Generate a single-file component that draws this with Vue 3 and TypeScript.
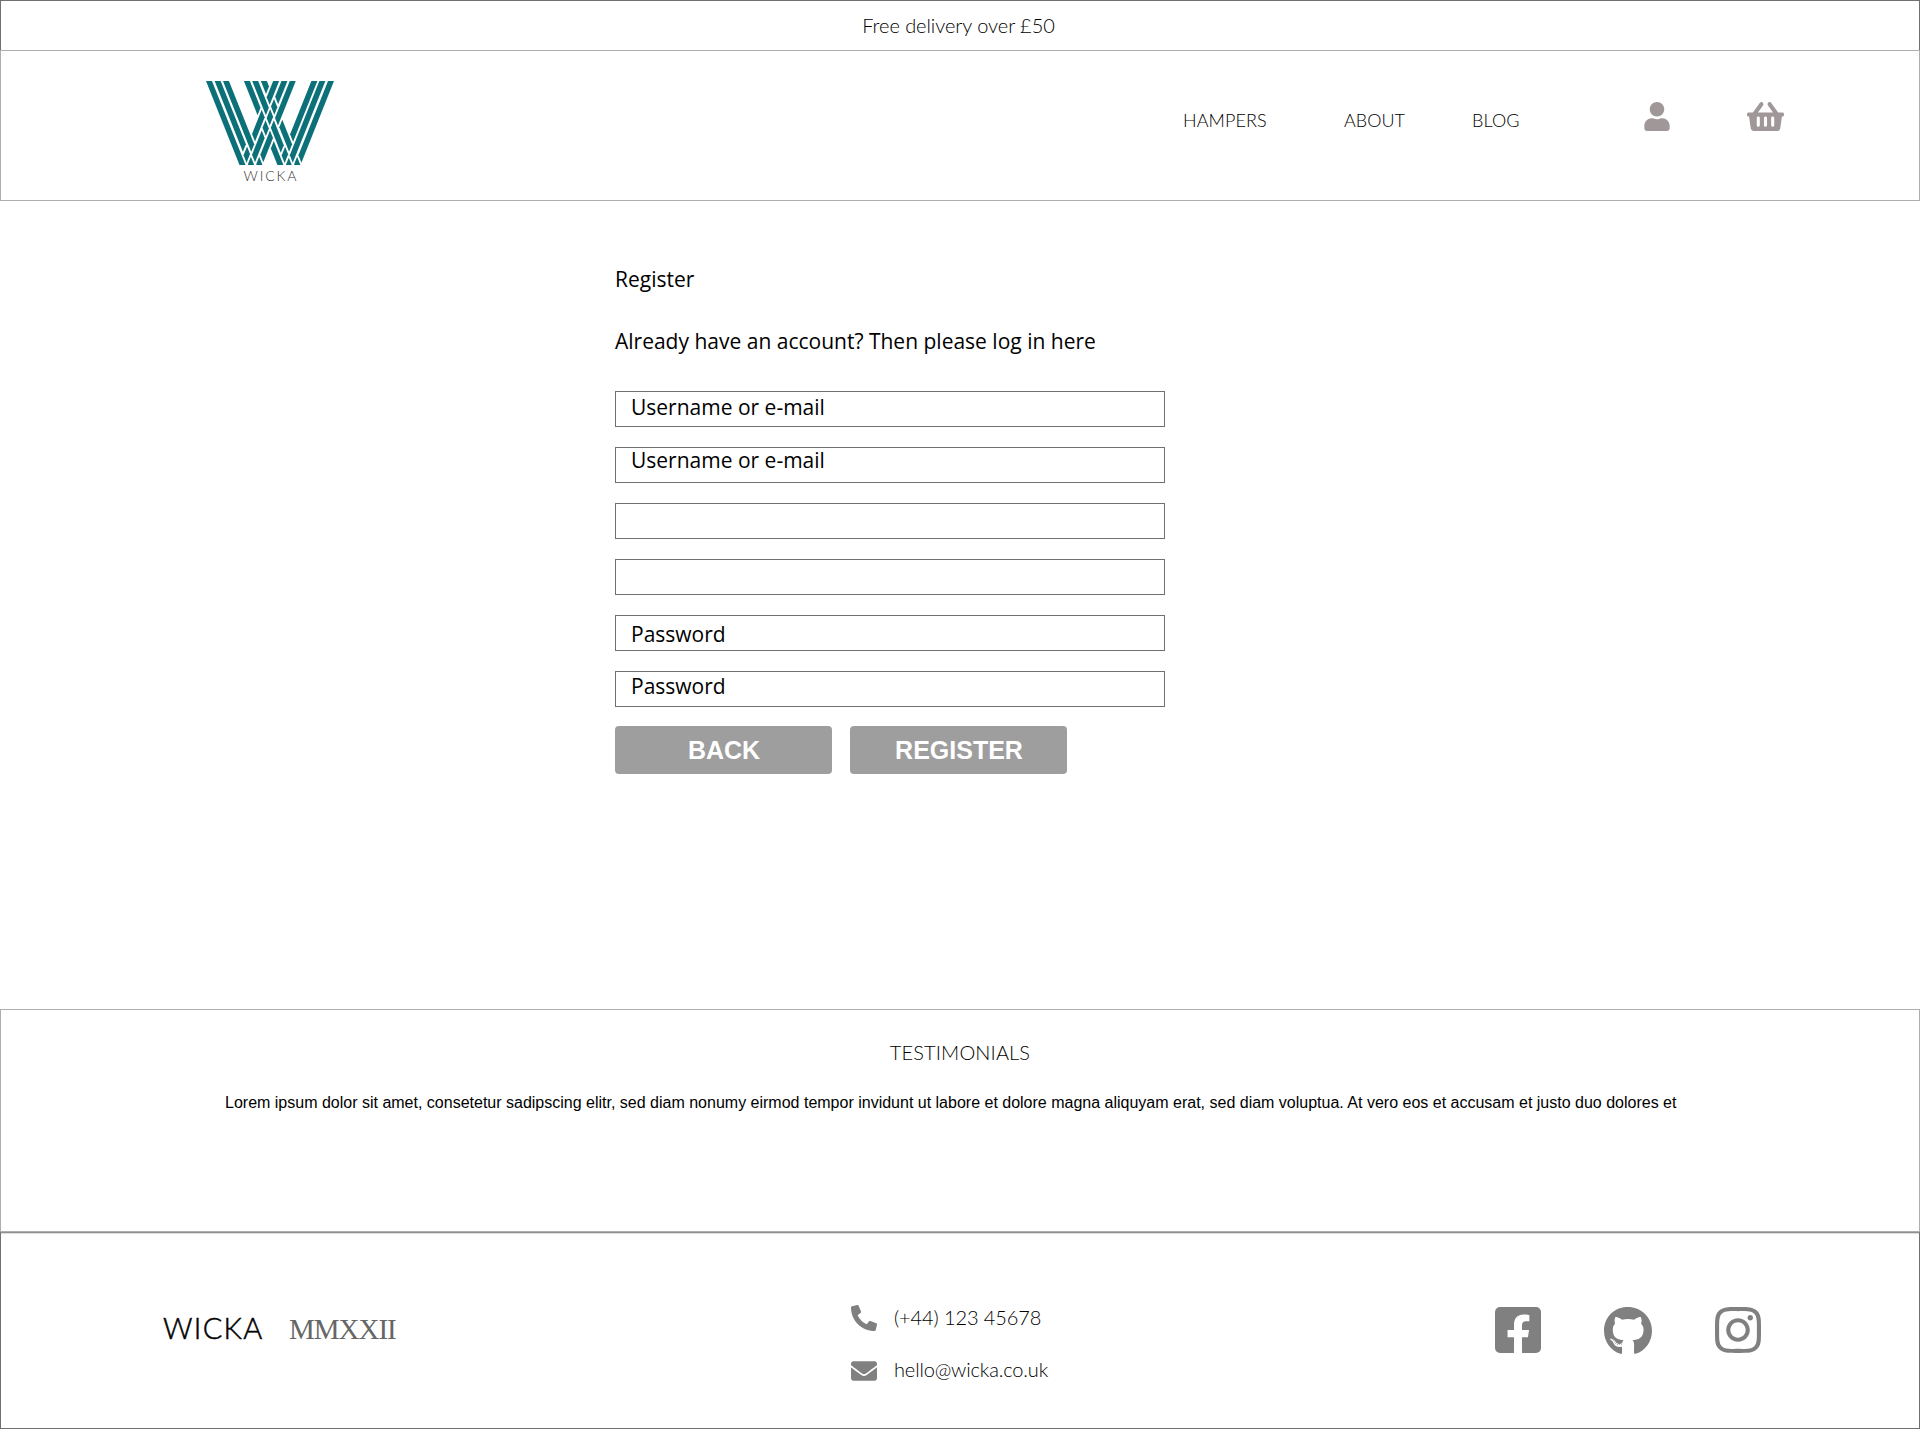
<script setup lang="ts">
interface Field {
  id: number
  text: string
  shift: number
}

const fields: Field[] = [
  { id: 1, text: 'Username or e-mail', shift: 2 },
  { id: 2, text: 'Username or e-mail', shift: -1 },
  { id: 3, text: '', shift: 0 },
  { id: 4, text: '', shift: 0 },
  { id: 5, text: 'Password', shift: 5 },
  { id: 6, text: 'Password', shift: 1 },
]

const lorem =
  'Lorem ipsum dolor sit amet, consetetur sadipscing elitr, sed diam nonumy eirmod tempor invidunt ut labore et dolore magna aliquyam erat, sed diam voluptua. At vero eos et accusam et justo duo dolores et'

/* Woven W: falling and rising strands pass over and under each other in turn. */
const slope = 0.397
const height = 254
const strand = 18
const gap = 6
const falling = [48, 74, 99, 162, 187, 213]
const rising = [250, 275, 300, 365, 389, 415]

/* u is constant along a falling strand, v along a rising one. */
function piece(u1: number, u2: number, v1: number, v2: number): string {
  return [[u1, v1], [u2, v1], [u2, v2], [u1, v2]]
    .map(([u, v]) => `${((u + v) / 2).toFixed(2)},${((v - u) / (2 * slope)).toFixed(2)}`)
    .join(' ')
}

function visible(start: number, end: number, hidden: number[]): [number, number][] {
  const parts: [number, number][] = []
  let from = start
  for (const x of hidden) {
    if (x - gap > from) parts.push([from, x - gap])
    from = x + strand + gap
  }
  if (end > from) parts.push([from, end])
  return parts
}

function meets(a: number, b: number): boolean {
  const y = (b - a) / (2 * slope)
  return y > 0 && y < height + 20
}

const pieces: string[] = []
falling.forEach((a, f) => {
  const over = rising.filter((b, r) => (f + r) % 2 === 1 && meets(a, b))
  for (const [v1, v2] of visible(a - 30, a + 260, over)) pieces.push(piece(a, a + strand, v1, v2))
})
rising.forEach((b, r) => {
  const over = falling.filter((a, f) => (f + r) % 2 === 0 && meets(a, b))
  for (const [u1, u2] of visible(b - 260, b + 60, over)) pieces.push(piece(u1, u2, b, b + strand))
})
</script>

<template>
  <div class="page">
    <div class="promo">Free delivery over £50</div>

    <header class="header">
      <div class="brand">
        <svg class="mark" viewBox="48 0 385 254" preserveAspectRatio="none">
          <polygon v-for="points in pieces" :key="points" :points="points" />
        </svg>
        <span class="brand-name">WICKA</span>
      </div>
      <nav class="nav">
        <a class="hampers">HAMPERS</a>
        <a class="about">ABOUT</a>
        <a class="blog">BLOG</a>
      </nav>
      <div class="tools">
        <svg class="user" viewBox="0 0 448 512"><path d="M224 256c70.7 0 128-57.3 128-128S294.7 0 224 0 96 57.3 96 128s57.3 128 128 128zm89.6 32h-16.7c-22.2 10.2-46.9 16-72.9 16s-50.6-5.8-72.9-16h-16.7C60.2 288 0 348.2 0 422.4V464c0 26.500 21.500 48 48 48h352c26.500 0 48-21.500 48-48v-41.600c0-74.200-60.200-134.400-134.400-134.400z" /></svg>
        <svg class="basket" viewBox="0 32 576 448"><path d="M576 216v16c0 13.255-10.745 24-24 24h-8l-26.113 182.788C514.509 462.435 494.257 480 470.37 480H105.63c-23.887 0-44.139-17.565-47.518-41.212L32 256h-8c-13.255 0-24-10.745-24-24v-16c0-13.255 10.745-24 24-24h67.341l106.78-146.821c10.395-14.292 30.407-17.453 44.701-7.058 14.293 10.395 17.453 30.408 7.058 44.701L170.477 192h235.046L326.12 82.821c-10.395-14.292-7.234-34.306 7.059-44.701 14.291-10.395 34.306-7.235 44.701 7.058L484.659 192H552c13.255 0 24 10.745 24 24zM312 392V280c0-13.255-10.745-24-24-24s-24 10.745-24 24v112c0 13.255 10.745 24 24 24s24-10.745 24-24zm112 0V280c0-13.255-10.745-24-24-24s-24 10.745-24 24v112c0 13.255 10.745 24 24 24s24-10.745 24-24zm-224 0V280c0-13.255-10.745-24-24-24s-24 10.745-24 24v112c0 13.255 10.745 24 24 24s24-10.745 24-24z" /></svg>
      </div>
    </header>

    <main class="main">
      <div class="form">
        <h1 class="line">Register</h1>
        <p class="line prompt">Already have an account? Then please log in here</p>
        <div class="fields">
          <div v-for="field in fields" :key="field.id" class="field">
            <span class="field-text" :style="{ marginTop: field.shift + 'px' }">{{ field.text }}</span>
          </div>
        </div>
        <div class="buttons">
          <button type="button">BACK</button>
          <button type="button">REGISTER</button>
        </div>
      </div>
    </main>

    <section class="testimonials">
      <h2>TESTIMONIALS</h2>
      <p>{{ lorem }}</p>
    </section>

    <footer class="footer">
      <div class="sign">
        <span class="sign-name">WICKA</span>
        <span class="sign-year">MMXXII</span>
      </div>
      <div class="contact">
        <div class="row">
          <svg class="phone" viewBox="0 0 512 512"><path transform="translate(512 0) scale(-1 1)" d="M14.610 361.800l112-48a24 24 0 0 1 28 6.900l49.600 60.600A370.660 370.660 0 0 0 381.400 204.110l-60.600-49.600a23.940 23.940 0 0 1-6.900-28l48-112A24.160 24.160 0 0 1 389.400.610l104 24A24 24 0 0 1 512 48c0 256.500-207.900 464-464 464a24 24 0 0 1-23.400-18.600l-24-104a24.290 24.290 0 0 1 14.010-27.600z" /></svg>
          <span class="tel">(+44) 123 45678</span>
        </div>
        <div class="row">
          <svg class="mail" viewBox="0 64 512 384"><path d="M502.3 190.8c3.9-3.1 9.7-.2 9.7 4.7V400c0 26.5-21.5 48-48 48H48c-26.5 0-48-21.500-48-48V195.600c0-5 5.700-7.800 9.700-4.700 22.400 17.400 52.100 39.500 154.100 113.600 21.100 15.400 56.700 47.800 92.200 47.600 35.700.3 72-32.800 92.300-47.600 102-74.100 131.600-96.300 154-113.700zM256 320c23.200.4 56.600-29.200 73.400-41.400 132.700-96.300 142.800-104.700 173.400-128.700 5.800-4.500 9.200-11.500 9.200-18.900v-19c0-26.500-21.500-48-48-48H48c-26.500 0-48 21.500-48 48v19c0 7.400 3.400 14.300 9.200 18.900 30.600 23.900 40.700 32.400 173.400 128.700 16.800 12.200 50.200 41.800 73.400 41.400z" /></svg>
          <span class="email">hello@wicka.co.uk</span>
        </div>
      </div>
      <div class="social">
        <svg class="facebook" viewBox="0 32 448 448"><path d="M400 32H48A48 48 0 0 0 0 80v352a48 48 0 0 0 48 48h137.250V327.690h-63V256h63v-54.640c0-62.150 37-96.480 93.670-96.480 27.140 0 55.520 4.840 55.520 4.840v61h-31.270c-30.810 0-40.420 19.120-40.420 38.730V256h68.780l-11 71.690h-57.780V480H400a48 48 0 0 0 48-48V80a48 48 0 0 0-48-48z" /></svg>
        <svg class="github" viewBox="0 8 496 484"><path d="M165.9 397.4c0 2-2.3 3.6-5.2 3.6-3.3.3-5.6-1.3-5.6-3.6 0-2 2.3-3.6 5.2-3.6 3-.3 5.6 1.3 5.6 3.6zm-31.1-4.5c-.7 2 1.3 4.3 4.3 4.9 2.6 1 5.6 0 6.2-2s-1.3-4.3-4.3-5.2c-2.6-.7-5.500.300-6.200 2.300zm44.200-1.700c-2.900.700-4.900 2.600-4.600 4.900.300 2 2.900 3.300 5.900 2.600 2.900-.700 4.900-2.600 4.600-4.600-.300-1.900-3-3.200-5.900-2.900zM244.800 8C106.100 8 0 113.300 0 252c0 110.900 69.800 205.800 169.500 239.200 12.800 2.300 17.300-5.600 17.300-12.100 0-6.200-.300-40.400-.300-61.400 0 0-70 15-84.700-29.800 0 0-11.400-29.100-27.800-36.600 0 0-22.900-15.700 1.600-15.400 0 0 24.900 2 38.600 25.800 21.900 38.600 58.600 27.500 72.900 20.900 2.300-16 8.800-27.100 16-33.700-55.900-6.200-112.300-14.300-112.300-110.500 0-27.500 7.600-41.300 23.600-58.900-2.600-6.500-11.100-33.300 2.600-67.900 20.900-6.500 69 27 69 27 20-5.600 41.500-8.500 62.800-8.500s42.800 2.900 62.800 8.500c0 0 48.100-33.600 69-27 13.700 34.700 5.200 61.400 2.600 67.900 16 17.700 25.800 31.500 25.800 58.900 0 96.500-58.900 104.200-114.800 110.500 9.200 7.900 17 22.900 17 46.400 0 33.700-.300 75.400-.300 83.600 0 6.500 4.600 14.400 17.300 12.100C428.200 457.800 496 362.900 496 252 496 113.300 383.500 8 244.800 8zM97.200 352.900c-1.300 1-1 3.300.700 5.200 1.600 1.600 3.900 2.300 5.200 1 1.300-1 1-3.300-.700-5.200-1.600-1.600-3.900-2.300-5.200-1zm-10.800-8.100c-.700 1.300.300 2.900 2.300 3.900 1.600 1 3.600.700 4.300-.700.700-1.300-.300-2.900-2.300-3.900-2-.600-3.600-.300-4.300.700zm32.400 35.600c-1.600 1.300-1 4.300 1.300 6.200 2.300 2.300 5.200 2.600 6.500 1 1.300-1.300.700-4.300-1.300-6.200-2.200-2.300-5.200-2.600-6.500-1zm-11.400-14.700c-1.600 1-1.600 3.600 0 5.900 1.600 2.300 4.300 3.300 5.600 2.300 1.600-1.300 1.600-3.900 0-6.200-1.400-2.300-4-3.300-5.600-2z" /></svg>
        <svg class="instagram" viewBox="0 32 448 448"><path d="M224.1 141c-63.6 0-114.9 51.3-114.9 114.9s51.3 114.9 114.9 114.9S339 319.5 339 255.9 287.7 141 224.1 141zm0 189.6c-41.1 0-74.7-33.5-74.7-74.7s33.5-74.7 74.7-74.7 74.7 33.5 74.7 74.7-33.6 74.7-74.7 74.7zm146.4-194.3c0 14.9-12 26.8-26.8 26.8-14.9 0-26.8-12-26.8-26.8s12-26.8 26.8-26.8 26.8 12 26.8 26.8zm76.1 27.2c-1.7-35.9-9.9-67.7-36.2-93.9-26.2-26.2-58-34.4-93.9-36.2-37-2.1-147.9-2.1-184.9 0-35.8 1.700-67.600 9.900-93.900 36.100s-34.400 58-36.200 93.900c-2.100 37-2.100 147.900 0 184.900 1.700 35.900 9.900 67.700 36.200 93.900s58 34.400 93.900 36.200c37 2.100 147.900 2.100 184.900 0 35.900-1.700 67.700-9.900 93.900-36.200 26.200-26.200 34.400-58 36.200-93.900 2.100-37 2.100-147.800 0-184.800zM398.800 388c-7.800 19.600-22.900 34.700-42.600 42.600-29.500 11.700-99.500 9-132.100 9s-102.700 2.600-132.100-9c-19.600-7.800-34.700-22.900-42.600-42.600-11.700-29.500-9-99.500-9-132.100s-2.600-102.700 9-132.100c7.800-19.600 22.900-34.700 42.600-42.600 29.500-11.700 99.500-9 132.100-9s102.700-2.600 132.100 9c19.600 7.800 34.700 22.900 42.600 42.600 11.700 29.500 9 99.500 9 132.100s2.700 102.700-9 132.100z" /></svg>
      </div>
    </footer>
  </div>
</template>

<style>
body {
  margin: 0;
  background: #fff;
}
</style>

<style scoped>
* {
  box-sizing: border-box;
}
svg {
  display: block;
  flex: none;
}
.page {
  display: flex;
  flex-direction: column;
  width: 1920px;
  height: 1429px;
  overflow: hidden;
  background: #fff;
  color: #000;
  font-family: Lato, sans-serif;
}
.promo {
  height: 50px;
  border: 1px solid #707070;
  border-bottom: 0;
  padding: 12px 3px 0 0;
  text-align: center;
  font-size: 20px;
  font-weight: 300;
  line-height: 24px;
  letter-spacing: -0.06px;
}
.header {
  display: flex;
  align-items: flex-start;
  height: 151px;
  border: 1px solid #aeaeae;
}
.brand {
  display: flex;
  flex-direction: column;
  align-items: center;
  width: 128px;
  margin: 30px 0 0 205px;
}
.mark {
  width: 128px;
  height: 84px;
  fill: #0b7078;
}
.brand-name {
  margin-top: 2px;
  padding-left: 2px;
  font-size: 14px;
  font-weight: 300;
  line-height: 17px;
  letter-spacing: 1.9px;
  color: #333;
}
.nav {
  display: flex;
  margin: 58px 0 0 849px;
  font-size: 18px;
  font-weight: 300;
  line-height: 22px;
}
.hampers {
  width: 161px;
  letter-spacing: 0.1px;
}
.about {
  width: 128px;
}
.blog {
  width: 60px;
  letter-spacing: 0.1px;
}
.tools {
  display: flex;
  justify-content: space-between;
  width: 140px;
  margin: 51px 0 0 112px;
  fill: #a09898;
}
.user {
  width: 26px;
  height: 29px;
}
.basket {
  width: 37px;
  height: 29px;
}
.main {
  flex: 1;
  padding: 65px 0 0 615px;
}
.form {
  width: 550px;
  font-family: "Open Sans", sans-serif;
  font-size: 21px;
  line-height: 26px;
}
.line {
  margin: 0;
  font-size: inherit;
  font-weight: 400;
}
.prompt {
  margin-top: 36px;
}
.fields {
  display: flex;
  flex-direction: column;
  gap: 20px;
  margin-top: 37px;
}
.field {
  display: flex;
  align-items: flex-start;
  height: 36px;
  border: 1px solid #707070;
  padding-left: 15px;
}
.buttons {
  display: flex;
  gap: 18px;
  margin-top: 19px;
}
.buttons button {
  width: 217px;
  height: 48px;
  border: 0;
  border-radius: 4px;
  padding: 0 0 0 1px;
  background: #9e9e9e;
  color: #fff;
  font: 700 25px/48px "Liberation Sans", Arial, sans-serif;
}
.testimonials {
  height: 223px;
  border: 1px solid #aeaeae;
  padding: 30px 0 0;
}
.testimonials h2 {
  margin: 0;
  text-align: center;
  font-size: 20px;
  font-weight: 300;
  line-height: 24px;
  letter-spacing: 0.12px;
}
.testimonials p {
  margin: 30px 0 0 224px;
  font: 16px/18px "Liberation Sans", Arial, sans-serif;
  white-space: nowrap;
}
.footer {
  display: flex;
  align-items: flex-start;
  height: 197px;
  border: 1px solid #707070;
  border-top-color: #909090;
  box-shadow: inset 0 1px #dcdcdc;
}
.sign {
  display: flex;
  align-items: baseline;
  width: 688px;
  margin: 77px 0 0 162px;
  line-height: 36px;
}
.sign-name {
  width: 126px;
  font-size: 29px;
  font-weight: 300;
  letter-spacing: 1.3px;
  -webkit-text-stroke: 0.5px #000;
}
.sign-year {
  font-family: "Liberation Serif", "Times New Roman", serif;
  font-size: 29px;
  letter-spacing: -1px;
  color: #666;
}
.contact {
  display: flex;
  flex-direction: column;
  gap: 28px;
  width: 643px;
  margin-top: 72px;
  font-size: 20px;
  font-weight: 300;
  line-height: 24px;
}
.row {
  display: flex;
  align-items: center;
  gap: 17px;
  height: 24px;
  fill: #808080;
}
.phone {
  width: 26px;
  height: 26px;
  margin-top: 2px;
}
.mail {
  width: 26px;
  height: 20px;
  margin-top: 3px;
}
.tel {
  letter-spacing: -0.1px;
}
.email {
  letter-spacing: -0.15px;
}
.social {
  display: flex;
  align-items: flex-start;
  justify-content: space-between;
  width: 266px;
  margin: 74px 0 0 1px;
  fill: #808080;
}
.facebook,
.instagram {
  width: 46px;
  height: 46px;
}
.github {
  width: 48px;
  height: 47px;
}
</style>
